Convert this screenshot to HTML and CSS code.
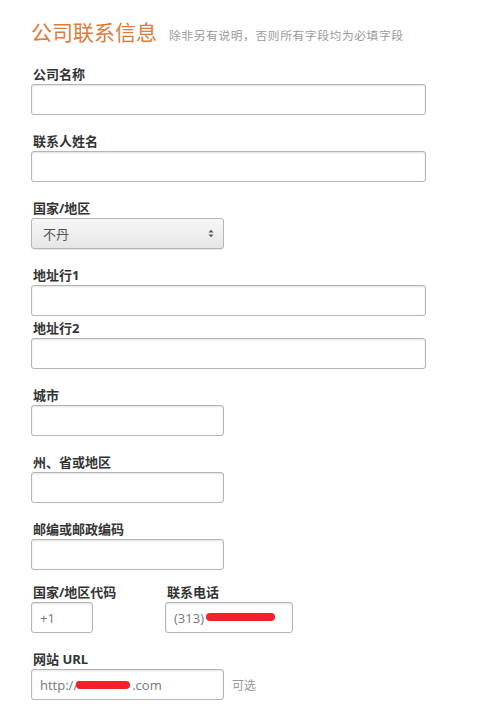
FILE: index.html
```html
<!DOCTYPE html>
<html lang="zh-CN">
<head>
    <meta charset="UTF-8">
    <meta name="viewport" content="width=device-width, initial-scale=1.0">
    <title>公司联系信息</title>
    <link rel="stylesheet" href="styles.css">
</head>
<body>

<div class="container">
    <div class="header">
        <h2>公司联系信息</h2>
        <span class="note">除非另有说明，否则所有字段均为必填字段</span>
    </div>

    <form id="contactForm">
        <div class="field">
            <label for="company">公司名称</label>
            <input type="text" id="company" class="wide">
        </div>

        <div class="field">
            <label for="contact">联系人姓名</label>
            <input type="text" id="contact" class="wide">
        </div>

        <div class="field">
            <label for="country">国家/地区</label>
            <span class="select-wrap">
                <select id="country">
                    <option>不丹</option>
                    <option>中国</option>
                    <option>美国</option>
                </select>
                <svg class="select-arrow" width="6" height="9" viewBox="0 0 6 9">
                    <path d="M0.5 3.5 L3 0.8 L5.5 3.5 Z" fill="#555"/>
                    <path d="M0.5 5.5 L3 8.2 L5.5 5.5 Z" fill="#555"/>
                </svg>
            </span>
        </div>

        <div class="field tight">
            <label for="addr1">地址行1</label>
            <input type="text" id="addr1" class="wide">
        </div>

        <div class="field">
            <label for="addr2">地址行2</label>
            <input type="text" id="addr2" class="wide">
        </div>

        <div class="field">
            <label for="city">城市</label>
            <input type="text" id="city" class="medium">
        </div>

        <div class="field">
            <label for="state">州、省或地区</label>
            <input type="text" id="state" class="medium">
        </div>

        <div class="field short">
            <label for="zip">邮编或邮政编码</label>
            <input type="text" id="zip" class="medium">
        </div>

        <div class="field row">
            <div class="col code-col">
                <label for="code">国家/地区代码</label>
                <input type="text" id="code" class="code" value="+1">
            </div>
            <div class="col">
                <label for="phone">联系电话</label>
                <span class="masked">
                    <input type="text" id="phone" class="phone" value="(313)">
                    <span class="redact phone-redact"></span>
                </span>
            </div>
        </div>

        <div class="field">
            <label for="site">网站 URL</label>
            <div class="inline">
                <span class="masked">
                    <input type="text" id="site" class="medium" value="http://                .com">
                    <span class="redact site-redact"></span>
                </span>
                <span class="optional">可选</span>
            </div>
        </div>
    </form>
</div>

</body>
</html>
```

FILE: styles.css
```css
* {
    box-sizing: border-box;
    margin: 0;
    padding: 0;
}

body {
    font-family: "Noto Sans CJK SC", "Open Sans", sans-serif;
    background: #fff;
    color: #333;
}

.container {
    padding: 19px 31px 0;
}

.header {
    display: flex;
    align-items: baseline;
    margin-bottom: 23px;
}

h2 {
    font-size: 21px;
    line-height: 24px;
    font-weight: normal;
    color: #e07c3a;
}

.note {
    font-size: 11.75px;
    letter-spacing: 0.6px;
    color: #9a9a9a;
    margin-left: 12px;
}

.field {
    margin-bottom: 18px;
}

.field.tight {
    margin-bottom: 4px;
}

.field.short {
    margin-bottom: 14px;
}

label {
    display: block;
    font-family: "Open Sans", "Noto Sans CJK SC", sans-serif;
    font-size: 13px;
    line-height: 16px;
    font-weight: bold;
    color: #333;
    margin: 0 0 2px 2px;
}

input, select {
    height: 31px;
    border: 1px solid #b5b5b5;
    border-radius: 3px;
    box-shadow: inset 0 1px 2px rgba(0, 0, 0, 0.12), 0 0 1px rgba(0, 0, 0, 0.05);
    font-family: "Open Sans", "Noto Sans CJK SC", sans-serif;
    font-size: 13px;
    color: #777;
    padding: 0 8px;
    background: #fff;
}

input:focus, select:focus {
    outline: none;
    border-color: #e07c3a;
}

.wide {
    width: 395px;
}

.medium {
    width: 193px;
}

.select-wrap {
    position: relative;
    display: inline-block;
}

select {
    width: 193px;
    height: 31px;
    -webkit-appearance: none;
    appearance: none;
    padding: 0 11px;
    color: #555;
    background: linear-gradient(#f7f7f7, #e6e6e6);
    box-shadow: 0 1px 1px rgba(0, 0, 0, 0.1);
    font-family: "Noto Sans CJK SC", "Open Sans", sans-serif;
}

.select-arrow {
    position: absolute;
    right: 10px;
    top: 11px;
    pointer-events: none;
}

.row {
    display: flex;
}

.code-col {
    width: 134px;
}

.col label {
    margin-left: 2px;
}

.code {
    width: 62px;
}

.phone {
    width: 128px;
}

.masked {
    position: relative;
    display: inline-block;
}

.redact {
    position: absolute;
    background: #f0212a;
    border-radius: 5px;
    pointer-events: none;
}

.phone-redact {
    left: 41px;
    top: 11px;
    width: 69px;
    height: 8px;
}

.site-redact {
    left: 45px;
    top: 12px;
    width: 54px;
    height: 8px;
}

.inline {
    display: flex;
    align-items: center;
}

.optional {
    font-size: 12px;
    color: #999;
    margin-left: 8px;
}
```
